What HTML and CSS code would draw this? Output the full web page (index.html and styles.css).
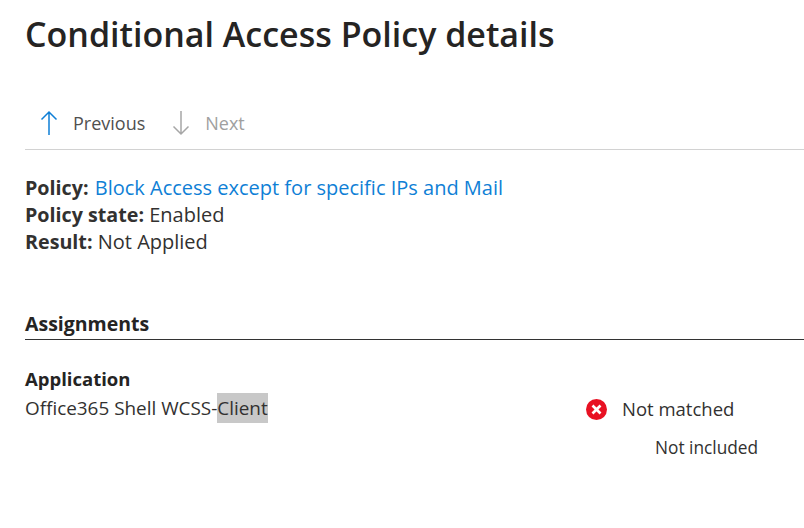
FILE: index.html
```html
<!DOCTYPE html>
<html lang="en">
<head>
<meta charset="utf-8">
<title>Conditional Access Policy details</title>
<link rel="stylesheet" href="styles.css">
</head>
<body>
<main class="page">
  <h1 class="title">Conditional Access Policy details</h1>
  <nav class="toolbar">
    <span class="tool">
      <svg class="tool-icon" width="18" height="26" viewBox="0 0 18 26"><path d="M9 2V25M1.5 9.5L9 2l7.500 7.500" fill="none" stroke="#0f7fd6" stroke-width="1.5"/></svg>
      <span>Previous</span>
    </span>
    <span class="tool tool-off">
      <svg class="tool-icon" width="18" height="26" viewBox="0 0 18 26"><path d="M9 1V24M1.500 16.500L9 24l7.500-7.500" fill="none" stroke="#a6a6a6" stroke-width="1.5"/></svg>
      <span>Next</span>
    </span>
  </nav>
  <section class="summary">
    <div><b>Policy:</b> <a class="link">Block Access except for specific IPs and Mail</a></div>
    <div><b>Policy state:</b> Enabled</div>
    <div><b>Result:</b> Not Applied</div>
  </section>
  <h2 class="section-head">Assignments</h2>
  <section class="row">
    <div>
      <div class="row-label">Application</div>
      <div class="row-value">Office365 Shell WCSS-<span class="selected">Client</span></div>
    </div>
    <div class="status">
      <div class="status-main">
        <svg class="status-icon" width="21" height="21" viewBox="0 0 22 22"><circle cx="11" cy="11" r="11" fill="#e81123"/><path d="M6.800 6.800l8.400 8.400M15.200 6.800l-8.400 8.400" stroke="#fff" stroke-width="2.800"/></svg>
        <span>Not matched</span>
      </div>
      <div class="status-note">Not included</div>
    </div>
  </section>
</main>
</body>
</html>
```
FILE: styles.css
```css
html, body { margin: 0; padding: 0; background: #fff; }
body { width: 804px; height: 528px; overflow: hidden; font-family: "Open Sans", "Segoe UI", sans-serif; color: #323130; font-size: 20px; line-height: 27px; }
.page { padding: 10px 0 0 25px; }
.title { margin: 0; font-size: 34px; line-height: 48px; font-weight: 600; color: #252423; }
.toolbar { display: flex; gap: 27px; margin-top: 49px; padding: 0 0 10px 15px; height: 32px; border-bottom: 1px solid #d2d2d2; font-size: 18px; color: #505050; }
.tool { display: flex; align-items: center; gap: 15px; }
.tool-off { color: #a0a0a0; }
.summary { margin-top: 24px; }
.summary b { font-weight: 700; font-size: 19.700px; }
.link { color: #0f7fd6; margin-left: 1px; }
.section-head { margin: 54px 0 0; font-size: 19.500px; line-height: 30px; font-weight: 700; border-bottom: 1px solid #333; color: #252423; }
.row { display: flex; justify-content: space-between; margin-top: 25px; font-size: 19px; }
.row-label { font-weight: 700; font-size: 18.500px; color: #252423; margin-bottom: 3px; }
.row-value { font-size: 18.900px; }
.selected { background: #c8c8c8; padding: 2px 0; }
.status { width: 218px; margin-top: 30px; }
.status-main { display: flex; align-items: center; gap: 15px; font-size: 18.500px; }
.status-icon { margin-top: 2px; }
.status-note { margin-top: 12px; padding-left: 69px; font-size: 17.300px; }
```
